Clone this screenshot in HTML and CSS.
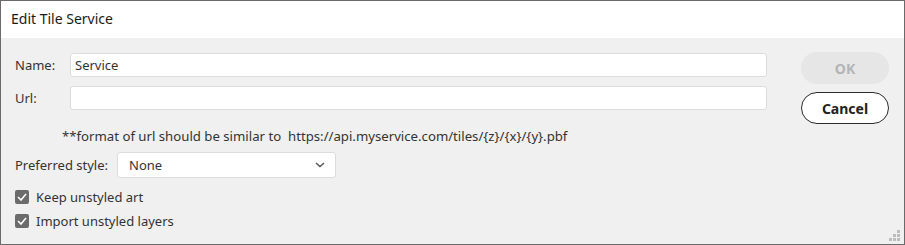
FILE: index.html
```html
<!DOCTYPE html>
<html lang="en">
<head>
    <meta charset="UTF-8">
    <title>Edit Tile Service</title>
    <link rel="stylesheet" href="styles.css">
</head>
<body>
    <div class="dialog">
        <div class="titlebar">Edit Tile Service</div>
        <div class="content">
            <div class="fields">
                <div class="row">
                    <label for="name" class="label">Name:</label>
                    <input type="text" id="name" class="text" value="Service">
                </div>
                <div class="row">
                    <label for="url" class="label">Url:</label>
                    <input type="text" id="url" class="text">
                </div>
                <div class="hint">**format of url should be similar to&nbsp; https://api.myservice.com/tiles/{z}/{x}/{y}.pbf</div>
                <div class="row style-row">
                    <label class="style-label">Preferred style:</label>
                    <div class="select">
                        <span>None</span>
                        <svg width="10" height="6" viewBox="0 0 10 6"><path d="M1 1l4 3.5L9 1" fill="none" stroke="#555" stroke-width="1.5"/></svg>
                    </div>
                </div>
                <div class="check first">
                    <span class="box"><svg width="10" height="8" viewBox="0 0 10 8"><path d="M1 4l3 3 5-6" fill="none" stroke="#fff" stroke-width="1.6"/></svg></span>
                    Keep unstyled art
                </div>
                <div class="check">
                    <span class="box"><svg width="10" height="8" viewBox="0 0 10 8"><path d="M1 4l3 3 5-6" fill="none" stroke="#fff" stroke-width="1.6"/></svg></span>
                    Import unstyled layers
                </div>
            </div>
            <div class="buttons">
                <button class="btn ok">OK</button>
                <button class="btn cancel">Cancel</button>
            </div>
            <svg class="grip" width="12" height="12" viewBox="0 0 12 12">
                <g fill="#bdbdbd">
                    <rect x="8" y="0" width="3" height="3"/>
                    <rect x="4" y="4" width="3" height="3"/><rect x="8" y="4" width="3" height="3"/>
                    <rect x="0" y="8" width="3" height="3"/><rect x="4" y="8" width="3" height="3"/><rect x="8" y="8" width="3" height="3"/>
                </g>
            </svg>
        </div>
    </div>
</body>
</html>
```

FILE: styles.css
```css
body {
    margin: 0;
    font-family: "Noto Sans", "Open Sans", sans-serif;
    font-size: 13px;
    color: #333;
}
.dialog {
    width: 903px;
    height: 243px;
    border: 1px solid #6a6a6a;
    display: flex;
    flex-direction: column;
    background-color: #f0f0f0;
}
.titlebar {
    height: 37px;
    background-color: #fff;
    padding-left: 10px;
    font-size: 14px;
    line-height: 36px;
    color: #1a1a1a;
}
.content {
    flex: 1;
    display: flex;
    position: relative;
    padding: 15px 14px 0 14px;
}
.fields {
    flex: 1;
    display: flex;
    flex-direction: column;
}
.row {
    display: flex;
    align-items: center;
    margin-bottom: 9px;
}
.label {
    width: 55px;
    flex-shrink: 0;
}
.text {
    width: 697px;
    height: 24px;
    box-sizing: border-box;
    border: 1px solid #dcdcdc;
    border-radius: 3px;
    padding: 0 4px;
    font: inherit;
    color: #333;
    background: #fff;
}
.hint {
    padding-left: 47px;
    margin: 9px 0 8px;
    line-height: 16px;
    font-size: 13.2px;
}
.style-row {
    margin-bottom: 0;
}
.select {
    margin-left: 9px;
    width: 219px;
    height: 26px;
    box-sizing: border-box;
    border: 1px solid #dcdcdc;
    border-radius: 3px;
    background: #fff;
    display: flex;
    align-items: center;
    justify-content: space-between;
    padding: 0 10px 0 11px;
}
.check {
    display: flex;
    align-items: center;
    gap: 7px;
    height: 18px;
    margin-bottom: 6px;
}
.check.first {
    margin-top: 10px;
}
.box {
    width: 14px;
    height: 14px;
    border-radius: 2px;
    background: #6b6b6b;
    display: flex;
    align-items: center;
    justify-content: center;
}
.buttons {
    width: 88px;
    display: flex;
    flex-direction: column;
    gap: 8px;
    margin-left: 21px;
    margin-right: 1px;
    margin-top: -1px;
}
.btn {
    height: 32px;
    border-radius: 16px;
    font: inherit;
    font-weight: bold;
    font-size: 14px;
}
.ok {
    background: #e6e6e6;
    border: none;
    color: #b4b4b4;
}
.cancel {
    background: #fff;
    border: 1px solid #2b2b2b;
    color: #222;
}
.grip {
    position: absolute;
    right: 3px;
    bottom: 2px;
}
```
